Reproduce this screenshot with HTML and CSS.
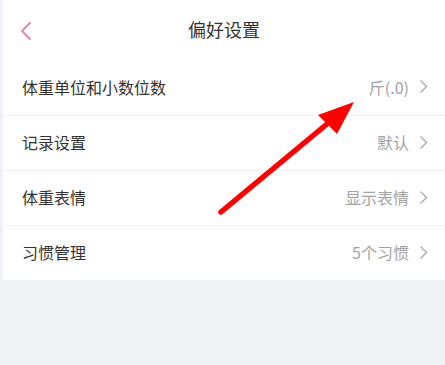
FILE: index.html
```html
<!DOCTYPE html>
<html lang="zh">
<head>
<meta charset="utf-8">
<link rel="stylesheet" href="styles.css">
</head>
<body>
<div class="page">
  <div class="panel">
    <header class="nav">
      <span class="back">
        <svg width="14" height="20" viewBox="0 0 14 20"><path d="M11 2 L3 10 L11 18" fill="none" stroke="#e58aa0" stroke-width="2" stroke-linecap="round" stroke-linejoin="round"/></svg>
      </span>
      <h1 class="title">偏好设置</h1>
    </header>
    <ul class="list">
      <li class="row"><span class="label">体重单位和小数位数</span><span class="value">斤(.0)</span><span class="chev"><svg width="9" height="15" viewBox="0 0 9 15"><path d="M1.5 1.5 L7.5 7.5 L1.5 13.5" fill="none" stroke="#aaa" stroke-width="1.4"/></svg></span></li>
      <li class="row"><span class="label">记录设置</span><span class="value">默认</span><span class="chev"><svg width="9" height="15" viewBox="0 0 9 15"><path d="M1.5 1.5 L7.5 7.5 L1.5 13.5" fill="none" stroke="#aaa" stroke-width="1.4"/></svg></span></li>
      <li class="row"><span class="label">体重表情</span><span class="value">显示表情</span><span class="chev"><svg width="9" height="15" viewBox="0 0 9 15"><path d="M1.5 1.5 L7.5 7.5 L1.5 13.5" fill="none" stroke="#aaa" stroke-width="1.4"/></svg></span></li>
      <li class="row"><span class="label">习惯管理</span><span class="value">5个习惯</span><span class="chev"><svg width="9" height="15" viewBox="0 0 9 15"><path d="M1.5 1.5 L7.5 7.5 L1.5 13.5" fill="none" stroke="#aaa" stroke-width="1.4"/></svg></span></li>
    </ul>
  </div>
  <svg class="arrow" width="445" height="365" viewBox="0 0 445 365">
    <line x1="221" y1="212" x2="327" y2="124" stroke="#f00" stroke-width="5.5" stroke-linecap="round"/>
    <polygon points="354,102 318,115 337,134" fill="#f00"/>
  </svg>
</div>
</body>
</html>
```
FILE: styles.css
```css
html, body {
  margin: 0;
  padding: 0;
}
body {
  width: 445px;
  height: 365px;
  overflow: hidden;
  background: #f1f2f6;
  font-family: "Noto Sans CJK SC", "Noto Sans", sans-serif;
}
.page {
  position: relative;
  height: 365px;
  padding-left: 3px;
  background: #f1f2f6;
  box-sizing: border-box;
}
.panel {
  background: #fff;
}
.nav {
  height: 60px;
  display: flex;
  align-items: center;
  justify-content: center;
  position: relative;
}
.back {
  position: absolute;
  left: 16px;
  top: 21px;
  display: flex;
}
.title {
  margin: 0;
  font-size: 18px;
  font-weight: normal;
  color: #333;
  padding-bottom: 3px;
}
.list {
  list-style: none;
  margin: 0;
  padding: 0;
}
.row {
  height: 54px;
  display: flex;
  align-items: center;
  padding: 0 17px 2px 19px;
  box-sizing: border-box;
  height: 55px;
  border-top: 1px solid #f3f3f5;
}
.row:first-child {
  border-top: 0;
}
.label {
  flex: 1;
  font-size: 16px;
  color: #333;
}
.value {
  font-size: 16px;
  color: #a3a3a3;
}
.chev {
  display: flex;
  margin-left: 10px;
}
.arrow {
  position: absolute;
  left: 0;
  top: 0;
  pointer-events: none;
}
```
